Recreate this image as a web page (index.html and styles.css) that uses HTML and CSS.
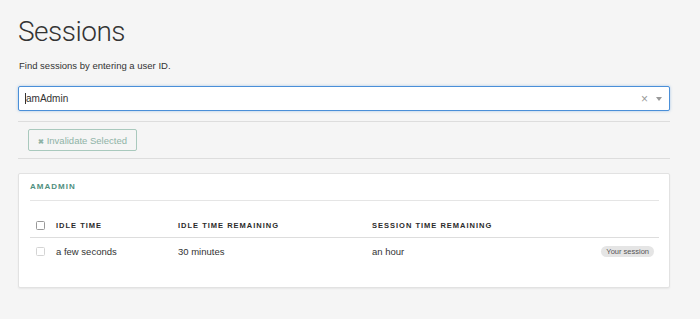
FILE: index.html
```html
<!DOCTYPE html>
<html lang="en">
<head>
  <meta charset="UTF-8" />
  <title>Sessions</title>
  <link rel="stylesheet" href="styles.css">
</head>
<body>
  <div class="page">
    <h1 class="page-title">Sessions</h1>
    <p class="intro">Find sessions by entering a user ID.</p>

    <div class="search">
      <span class="caret"></span>
      <span class="search-value">amAdmin</span>
      <span class="search-clear">&times;</span>
      <span class="search-arrow"></span>
    </div>

    <div class="toolbar">
      <button class="btn-invalidate" disabled><span class="btn-icon">&#10006;</span> Invalidate Selected</button>
    </div>

    <section class="card">
      <h2 class="card-title">amAdmin</h2>
      <div class="session-table">
        <div class="row head">
          <span class="cell"><span class="check"></span></span>
          <span class="cell">Idle Time</span>
          <span class="cell">Idle Time Remaining</span>
          <span class="cell">Session Time Remaining</span>
          <span class="cell"></span>
        </div>
        <div class="row">
          <span class="cell"><span class="check disabled"></span></span>
          <span class="cell">a few seconds</span>
          <span class="cell">30 minutes</span>
          <span class="cell">an hour</span>
          <span class="cell"><span class="badge">Your session</span></span>
        </div>
      </div>
    </section>
  </div>
</body>
</html>
```

FILE: styles.css
```css
body {
  margin: 0;
  padding: 0;
  background-color: #f5f5f5;
  color: #333;
  font-family: 'Liberation Sans', Arial, sans-serif;
}
.page {
  padding: 16px 30px 20px 18px;
}
.page-title {
  margin: 0;
  font-family: Roboto, 'Liberation Sans', sans-serif;
  font-weight: 300;
  font-size: 28px;
  line-height: 31px;
  letter-spacing: -0.5px;
  color: #333;
}
.intro {
  margin: 12px 0 0 1px;
  font-size: 9.5px;
  line-height: 14px;
}
.search {
  margin-top: 13px;
  height: 23px;
  display: flex;
  align-items: center;
  padding: 0 6px 0 6px;
  background: white;
  border: 1px solid #4a8fd8;
  border-radius: 2px;
  box-shadow: 0 0 3px rgba(74, 143, 216, 0.45);
  font-size: 10px;
}
.caret {
  width: 1px;
  height: 11px;
  background: #333;
}
.search-value {
  flex: 1;
}
.search-clear {
  color: #999;
  font-size: 12px;
  margin-right: 8px;
}
.search-arrow {
  width: 0;
  height: 0;
  border-left: 3.5px solid transparent;
  border-right: 3.5px solid transparent;
  border-top: 4px solid #999;
  margin-right: 1px;
}
.toolbar {
  margin-top: 10px;
  padding: 7px 10px 7px;
  border-top: 1px solid #ddd;
  border-bottom: 1px solid #ddd;
}
.btn-invalidate {
  display: block;
  height: 22px;
  width: 109px;
  padding: 0;
  background: transparent;
  border: 1px solid #a9c9bd;
  border-radius: 2px;
  color: #8fb3a6;
  font-family: 'Liberation Sans', Arial, sans-serif;
  font-size: 9.5px;
}
.btn-icon {
  font-size: 7px;
  font-weight: bold;
}
.card {
  margin-top: 14px;
  padding: 0 10px 23px 11px;
  background: white;
  border: 1px solid #e2e2e2;
  border-radius: 2px;
  box-shadow: 0 1px 2px rgba(0, 0, 0, 0.06);
}
.card-title {
  margin: 0;
  padding: 7px 0 7px;
  line-height: 12px;
  font-size: 8px;
  font-weight: bold;
  letter-spacing: 1px;
  text-transform: uppercase;
  color: #4f8f7e;
  border-bottom: 1px solid #e5e5e5;
}
.session-table {
  margin-top: 13px;
}
.row {
  display: grid;
  grid-template-columns: 26px 122px 194px 1fr auto;
  align-items: center;
  height: 26px;
  font-size: 9.5px;
}
.row.head {
  height: 23px;
  border-bottom: 1px solid #ddd;
  font-size: 7.5px;
  font-weight: bold;
  letter-spacing: 1px;
  text-transform: uppercase;
  color: #2b2b2b;
}
.cell {
  display: flex;
  align-items: center;
}
.check {
  display: block;
  margin-left: 6px;
  width: 7px;
  height: 7px;
  border: 1px solid #999;
  border-radius: 1.5px;
  background: white;
}
.check.disabled {
  border-color: #d4d4d4;
}
.badge {
  margin-right: 5px;
  padding: 0 5px;
  height: 11px;
  line-height: 11px;
  border-radius: 6px;
  background: #e5e5e5;
  color: #555;
  font-size: 7.5px;
}
```
